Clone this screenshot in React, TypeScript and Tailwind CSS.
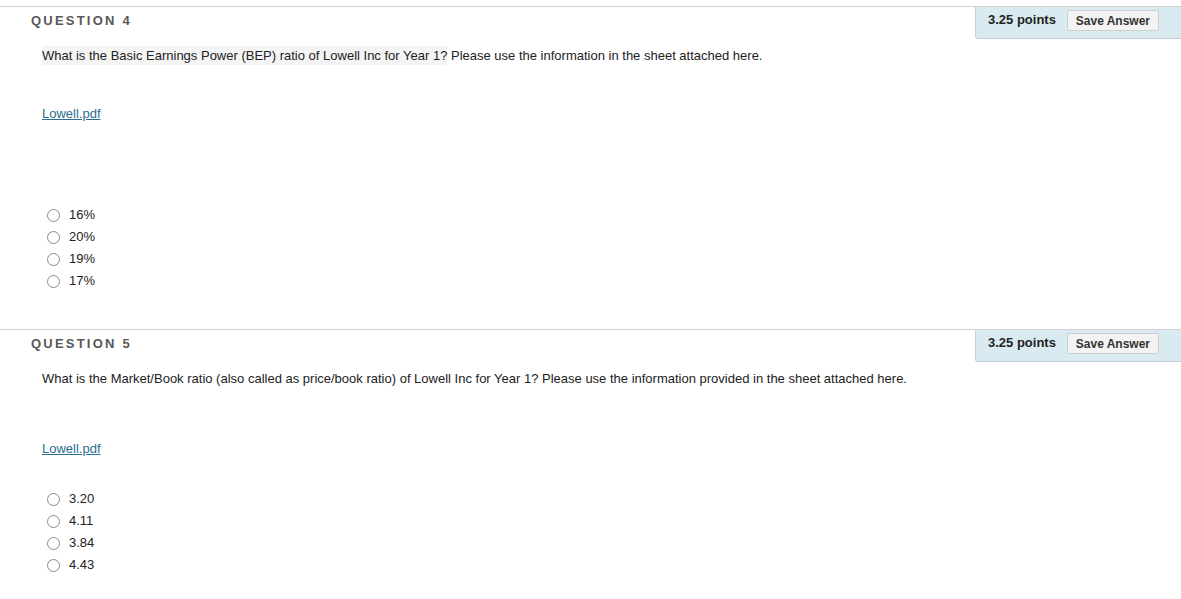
import React from "react"

type Question = {
  num: number
  text: React.ReactNode
  options: string[]
  textGap: string
  linkGap: string
  radioGap: string
}

const questions: Question[] = [
  {
    num: 4,
    text: (
      <>
        <span className="bg-[#f4f4f4] py-[2px]">
          What is the Basic Earnings Power (BEP) ratio of Lowell Inc for Year 1?
        </span>{" "}
        Please use the information in the sheet attached here.
      </>
    ),
    options: ["16%", "20%", "19%", "17%"],
    textGap: "mt-[7px]",
    linkGap: "mt-[38px]",
    radioGap: "mt-[80px]",
  },
  {
    num: 5,
    text: "What is the Market/Book ratio (also called as price/book ratio) of Lowell Inc for Year 1? Please use the information provided in the sheet attached here.",
    options: ["3.20", "4.11", "3.84", "4.43"],
    textGap: "mt-[7px]",
    linkGap: "mt-[50px]",
    radioGap: "mt-[29px]",
  },
]

function QuestionBlock({ q }: { q: Question }) {
  return (
    <div className="border-t border-[#d0d0d0] pb-[37px]">
      <div className="flex items-start justify-between">
        <div className="pl-[31px] pt-[6px] text-[13px] leading-4 font-bold tracking-[0.17em] text-[#585858]">
          QUESTION {q.num}
        </div>
        <div className="flex h-[32px] w-[206px] items-start rounded-bl-[3px] border-b border-l border-[#c3d2d8] bg-[#d9ebf1] pl-[12px]">
          <span className="mt-[5px] text-[13px] leading-4 font-bold text-[#222]">3.25 points</span>
          <button className="mt-[3px] ml-[11px] h-[21px] w-[92px] rounded-[2px] border border-[#cfcfcf] bg-[#f3f3f3] text-[12px] font-bold text-[#333]">
            Save Answer
          </button>
        </div>
      </div>

      <div className={`${q.textGap} pl-[42px] text-[13px] leading-5 text-[#222]`}>{q.text}</div>

      <div className={`${q.linkGap} pl-[42px] text-[13px] leading-5`}>
        <a href="#" className="text-[#2b6e8f] underline">
          Lowell.pdf
        </a>
      </div>

      <div className={`${q.radioGap} pl-[47px]`}>
        {q.options.map((o) => (
          <label key={o} className="flex h-[22px] items-center text-[13px] text-[#222]">
            <span className="h-[13px] w-[13px] rounded-full border border-[#8a8a8a] bg-white" />
            <span className="ml-[9px]">{o}</span>
          </label>
        ))}
      </div>
    </div>
  )
}

export default function App() {
  return (
    <div className="min-h-[599px] w-[1181px] bg-white pt-[6px] font-['Liberation_Sans',Arial,sans-serif]">
      {questions.map((q) => (
        <QuestionBlock key={q.num} q={q} />
      ))}
    </div>
  )
}
